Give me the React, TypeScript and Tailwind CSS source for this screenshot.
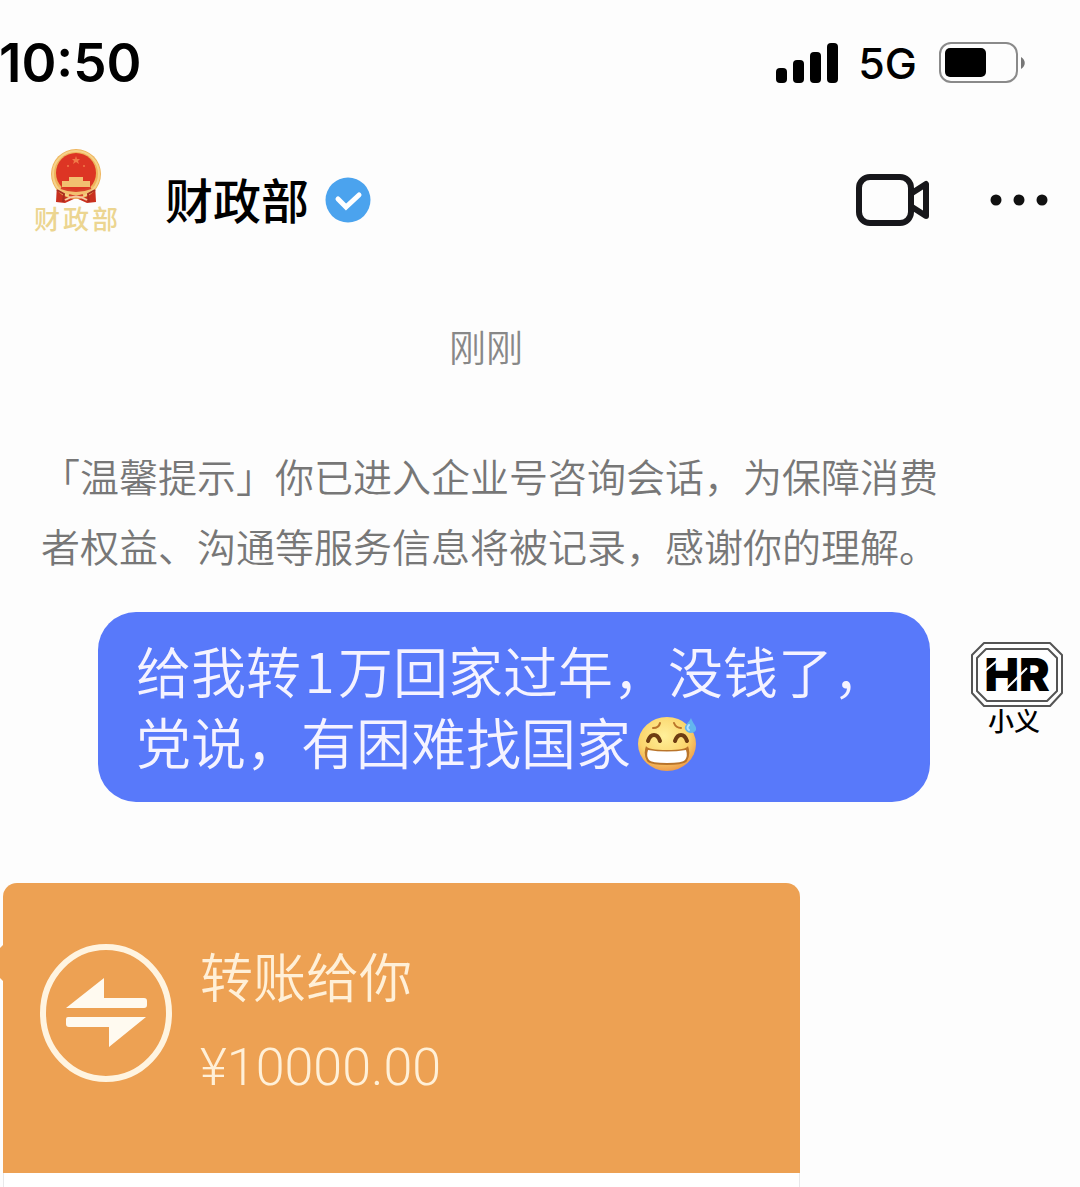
import React from "react";

const cjk = "font-['Noto_Sans_CJK_SC',sans-serif]";

function SignalIcon() {
  return (
    <svg width="62" height="40" viewBox="0 0 62 40" aria-hidden="true">
      <rect x="0" y="25" width="11" height="15" rx="4" />
      <rect x="17" y="17" width="11" height="23" rx="4" />
      <rect x="34" y="9" width="11" height="31" rx="4" />
      <rect x="51" y="0" width="11" height="40" rx="4" />
    </svg>
  );
}

function BatteryIcon() {
  return (
    <svg width="88" height="42" viewBox="0 0 88 42" aria-hidden="true">
      <rect x="1" y="1" width="77" height="39" rx="11" fill="none" stroke="#8a8a8a" strokeWidth="2" />
      <rect x="6" y="6" width="41" height="29" rx="5" />
      <path d="M82 15c5 3 5 9 0 12z" fill="#777" />
    </svg>
  );
}

function EmblemIcon() {
  return (
    <svg width="54" height="56" viewBox="0 0 54 56" aria-hidden="true">
      <path d="M8 36h38l1 18-9 1-11-5-11 5-9-1z" fill="#c9301f" />
      <circle cx="27" cy="26" r="25" fill="#eeb45c" />
      <circle cx="27" cy="26" r="23" fill="none" stroke="#f6d28a" strokeWidth="2" />
      <circle cx="27" cy="25" r="20" fill="#dd3524" />
      <path d="M27 8l1 3h3l-2 2 1 3-3-2-3 2 1-3-2-2h3z" fill="#f07a48" />
      <circle cx="19" cy="18" r="1" fill="#f07a48" />
      <circle cx="35" cy="18" r="1" fill="#f07a48" />
      <path d="M20 29h14v4h7v6H13v-6h7z" fill="#f2c070" />
      <path d="M9 38q18 9 36 0l-4 7q-14 6-28 0z" fill="#f2c070" />
      <path d="M12 40q15 6 30 0M20 47q7 3 14 0" fill="none" stroke="#d8422a" strokeWidth="2" />
      <path d="M8 42l7 4-1 8M46 42l-7 4 1 8" fill="none" stroke="#a92c20" strokeWidth="2" />
      <path d="M16 52q11-7 22 0" fill="none" stroke="#f5c9a0" strokeWidth="2" />
    </svg>
  );
}

function VerifiedIcon() {
  return (
    <svg width="46" height="46" viewBox="0 0 46 46" role="img" aria-label="已认证">
      <circle cx="23" cy="23" r="22.5" fill="#4ba3ee" />
      <path d="M13 22l8 8 13-12" fill="none" stroke="#fff" strokeWidth="5" strokeLinecap="round" />
    </svg>
  );
}

function VideoIcon() {
  return (
    <svg width="74" height="52" viewBox="0 0 74 52" fill="none" stroke="#17171b" strokeWidth="6" strokeLinejoin="round" aria-hidden="true">
      <rect x="3" y="3" width="52" height="46" rx="11" />
      <path d="M56 19l14-9v32l-14-9" />
    </svg>
  );
}

function MoreIcon() {
  return (
    <svg width="58" height="12" viewBox="0 0 58 12" fill="#111" aria-hidden="true">
      <circle cx="6" cy="6" r="5.5" />
      <circle cx="29" cy="6" r="5.5" />
      <circle cx="52" cy="6" r="5.5" />
    </svg>
  );
}

function SweatSmile() {
  return (
    <svg className="ml-1.5 inline-block align-[-8px]" width="62" height="56" viewBox="0 0 62 56" role="img" aria-label="尴尬笑">
      <defs>
        <radialGradient id="face" cx="45%" cy="35%" r="65%">
          <stop offset="0" stopColor="#fff09a" />
          <stop offset="0.65" stopColor="#fbd56c" />
          <stop offset="1" stopColor="#ee9d4c" />
        </radialGradient>
      </defs>
      <ellipse cx="30" cy="28" rx="29" ry="27" fill="url(#face)" />
      <path d="M16 12q6 0 7-5M37 7q2 5 7 5" fill="none" stroke="#b9742a" strokeWidth="2" strokeLinecap="round" />
      <path d="M11 25q2-6 6-6t6 6M38 25q2-6 6-6t6 6" fill="none" stroke="#6d3c12" strokeWidth="4" strokeLinecap="round" />
      <path d="M9 30q2 4 21 4t21-4q3 8-1 15-3 4-20 4t-20-4q-4-7-1-15z" fill="#b9742a" />
      <path d="M11 34q19 3 38 0 2 6-1 10-2 3-18 3t-18-3q-3-4-1-10z" fill="#fff" />
      <path d="M54 2c2 6 6 8 5 12-2 4-9 4-11-1-1-4 4-6 6-11z" fill="#63b6ee" />
      <path d="M52 9q-3 3 0 5" fill="none" stroke="#b5e2ff" strokeWidth="2" strokeLinecap="round" />
    </svg>
  );
}

function HRLogo() {
  return (
    <svg width="92" height="66" viewBox="0 0 92 66" role="img" aria-label="HR">
      <g fill="#fff" stroke="#555" strokeWidth="2" strokeLinejoin="round">
        <path d="M13 1h66l12 12v38L79 64H13L1 51V13z" />
        <path d="M15 7h62l9 9v33l-10 10H16L6 49V16z" />
      </g>
      <text x="46" y="49" textAnchor="middle" className="font-['Inter',sans-serif] text-[46px] font-black">HR</text>
      <path d="M14 29L28 17M35 47L56 26" stroke="#fff" strokeWidth="2" fill="none" />
    </svg>
  );
}

function TransferIcon() {
  return (
    <svg width="132" height="138" viewBox="0 0 132 138" aria-hidden="true">
      <ellipse cx="66" cy="69" rx="63" ry="66" fill="none" stroke="#fff4e0" strokeWidth="6" />
      <path d="M26 64L64 34v20h40q3 0 3 3v4q0 3-3 3zM106 73H28q-2 0-2 2v5q0 3 3 3h40v20z" fill="#fffaf0" />
    </svg>
  );
}

const message = "给我转\u200A1\u200A万回家过年，没钱了，党说，有困难找国家";

export default function App() {
  return (
    <main className={`${cjk} min-h-screen overflow-hidden bg-[#fdfdfd] text-black`}>
      <div className="flex h-[126px] items-center justify-between pr-[53px] font-['Inter',sans-serif]">
        <time className="-ml-px text-[53px] leading-none font-semibold">10:50</time>
        <div className="flex items-center">
          <SignalIcon />
          <span className="ml-5 text-[43px] leading-none font-medium">5G</span>
          <span className="ml-[22px]"><BatteryIcon /></span>
        </div>
      </div>

      <header className="flex items-start justify-between pt-[22px] pr-8 pl-[34px]">
        <div className="flex items-start">
          <div className="flex w-[84px] flex-col items-center">
            <EmblemIcon />
            <div className="flex w-full justify-between text-[26px] leading-7 font-medium text-[#ecd590]">
              <span>财</span><span>政</span><span>部</span>
            </div>
          </div>
          <h1 className="mt-[18px] ml-[47px] text-[48px] leading-[64px] font-medium">财政部</h1>
          <span className="mt-[29px] ml-4"><VerifiedIcon /></span>
        </div>
        <div className="mt-[26px] flex items-center gap-[60px]">
          <button type="button" aria-label="视频通话"><VideoIcon /></button>
          <button type="button" aria-label="更多"><MoreIcon /></button>
        </div>
      </header>

      <p className="mt-[84px] pr-[108px] text-center text-[37px] leading-[60px] font-[350] text-[#888]">刚刚</p>

      <p className="mt-16 pr-[139px] pl-[41px] text-[39px] leading-[70px] font-[350] text-[#777]">
        「温馨提示」你已进入企业号咨询会话，为保障消费者权益、沟通等服务信息将被记录，感谢你的理解。
      </p>

      <section className="mt-8 flex items-start gap-[41px] pr-[17px] pl-[98px]">
        <p className="min-w-0 flex-1 rounded-[38px] bg-[#5879fa] pt-[22px] pr-8 pb-[26px] pl-[38px] text-[55px] leading-[71px] font-[350] text-[#f5f3ff]">
          {message}<SweatSmile />
        </p>
        <div className="flex flex-col items-center pt-[30px]">
          <HRLogo />
          <span className="pr-1.5 text-[26px] leading-6 font-medium">小义</span>
        </div>
      </section>

      <section className="relative mt-[81px] mr-[280px] ml-[3px]">
        <div className="absolute top-[56px] -left-2 size-12 rotate-45 bg-[#eda153]" />
        <div className="relative flex h-[290px] items-start rounded-t-[14px] bg-[#eda153] pt-[61px] pl-[37px] text-[#fff0d8]">
          <TransferIcon />
          <div className="ml-7">
            <h2 className="text-[53px] leading-[62px] font-[350]">转账给你</h2>
            <p className="mt-8 font-['Roboto',sans-serif] text-[52px] leading-[60px] font-light">¥10000.00</p>
          </div>
        </div>
        <div className="h-3.5 border-x border-[#e8e8ea] bg-white" />
      </section>
    </main>
  );
}
